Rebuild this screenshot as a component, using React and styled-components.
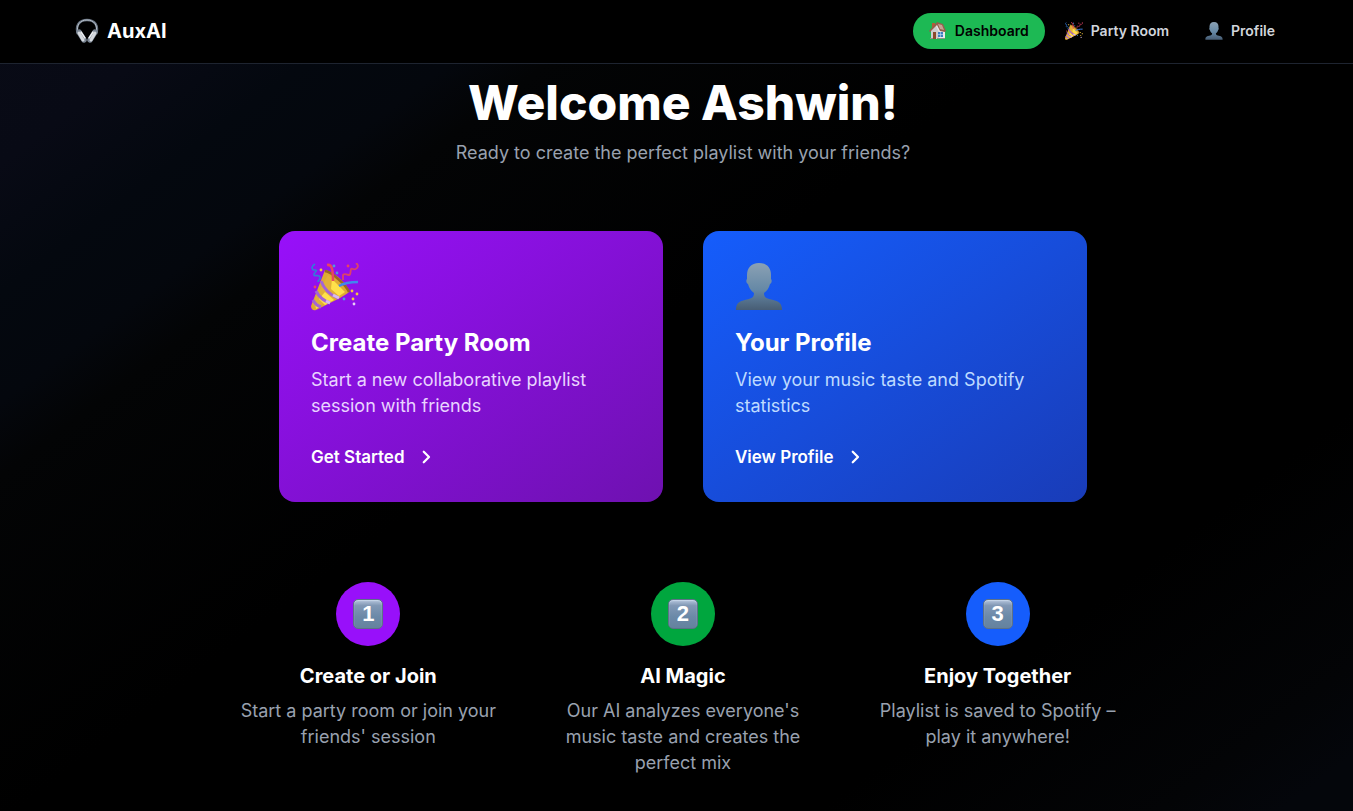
import React from "react";
import styled, { createGlobalStyle } from "styled-components";

const GlobalStyle = createGlobalStyle`
  *, *::before, *::after { box-sizing: border-box; }
  html { background: #000; }
  body {
    margin: 0;
    color: #fff;
    background: #000;
    font-family: Inter, "Liberation Sans", sans-serif;
    -webkit-font-smoothing: antialiased;
  }
  h1, h2, h3, p { margin: 0; }
  a { color: inherit; text-decoration: none; }
`;

const Page = styled.div`
  display: flex;
  flex-direction: column;
  min-height: 100vh;
  background: linear-gradient(143deg, #090b16 0%, #080a15 9%, #04080f 16%, #04070d 22%, #030405 26%, #000 45%, #000 78%, #030406 92%, #04060b 97%);
`;

const Header = styled.header`
  background: #000;
  border-bottom: 1px solid #1e2430;
  padding-left: 13px;
`;

const HeaderInner = styled.div`
  display: flex;
  align-items: center;
  justify-content: space-between;
  max-width: 1280px;
  height: 63px;
  margin: 0 auto;
  padding: 0 32px 2px;
`;

const Brand = styled.a`
  display: flex;
  align-items: center;
  gap: 8px;
  font-size: 20px;
  font-weight: 700;
  line-height: 28px;
`;

const Nav = styled.nav`
  display: flex;
  gap: 4px;
`;

const NavLink = styled.a`
  display: flex;
  align-items: center;
  gap: 8px;
  height: 36px;
  padding: 0 16px;
  border-radius: 18px;
  font-size: 14px;
  font-weight: 600;
  color: ${(p) => (p.$active ? "#000" : "#d1d5dc")};
  background: ${(p) => (p.$active ? "#1db954" : "transparent")};
`;

const Main = styled.main`
  display: flex;
  flex-direction: column;
  align-items: center;
  padding: 15px 0 32px 13px;
`;

const Title = styled.h1`
  font-size: 48px;
  font-weight: 800;
  line-height: 48px;
  text-align: center;
`;

const Subtitle = styled.p`
  margin-top: 12px;
  font-size: 18px;
  line-height: 28px;
  color: #99a1af;
`;

const Cards = styled.section`
  display: grid;
  grid-template-columns: 1fr 1fr;
  gap: 40px;
  width: 100%;
  max-width: 808px;
  margin-top: 64px;
`;

const Card = styled.article`
  display: flex;
  flex-direction: column;
  align-items: flex-start;
  padding: 32px;
  border-radius: 16px;
  background: linear-gradient(to bottom right, ${(p) => p.$from}, ${(p) => p.$to});
`;

const CardTitle = styled.h2`
  margin-top: 16px;
  font-size: 24px;
  font-weight: 700;
  line-height: 32px;
`;

const CardText = styled.p`
  margin-top: 8px;
  font-size: 18px;
  line-height: 26px;
  color: ${(p) => p.$color};
`;

const CardLink = styled.a`
  display: flex;
  align-items: center;
  gap: 12px;
  margin-top: 25px;
  font-size: 17px;
  font-weight: 600;
  line-height: 26px;
`;

const Steps = styled.section`
  display: grid;
  grid-template-columns: repeat(3, 1fr);
  gap: 48px;
  width: 100%;
  max-width: 896px;
  margin-top: 80px;
`;

const Step = styled.article`
  display: flex;
  flex-direction: column;
  align-items: center;
  text-align: center;
`;

const StepCircle = styled.div`
  display: flex;
  align-items: center;
  justify-content: center;
  width: 64px;
  height: 64px;
  border-radius: 50%;
  background: ${(p) => p.$color};
`;

const Keycap = styled.span`
  display: flex;
  align-items: center;
  justify-content: center;
  width: 30px;
  height: 30px;
  border: 1px solid #5d7188;
  border-radius: 5px;
  background: linear-gradient(#b5c5dc 0%, #8198b5 20%, #6b89a8 60%, #65829e 100%);
  box-shadow: inset 0 1px 1px #c6d5e8;
  font-family: "Liberation Sans", sans-serif;
  font-size: 22px;
  font-weight: 700;
  line-height: 28px;
`;

const StepTitle = styled.h3`
  margin-top: 16px;
  font-size: 20px;
  font-weight: 700;
  line-height: 28px;
`;

const StepText = styled.p`
  margin-top: 8px;
  font-size: 18px;
  line-height: 26px;
  color: #99a1af;
`;

function Headphones() {
  return (
    <svg width="24" height="26" viewBox="0 0 24 26" fill="none" aria-hidden="true">
      <path d="M3 16C0 8 4 2 12 2s12 6 9 14" stroke="#66717f" strokeWidth="2.4" />
      <path d="M3 14C1 7 5 2 12 2s11 5 9 12" stroke="#b5bec8" strokeWidth="1" />
      <path d="M4 14l5 8M20 14l-5 8" stroke="#788391" strokeWidth="5.4" strokeLinecap="round" />
      <path d="M4 15l4 7M20 15l-4 7" stroke="#d5d9de" strokeWidth="3" strokeLinecap="round" />
      <path d="M6 14l4 6M18 14l-4 6" stroke="#eef0f2" strokeWidth="1.4" strokeLinecap="round" />
    </svg>
  );
}

function House() {
  return (
    <svg width="18" height="18" viewBox="0 0 18 18" aria-hidden="true">
      <path d="M3 1h3v6H3z" fill="#b45a3a" />
      <path d="M2 8l6-6 6 2 2 5v8H2z" fill="#eceaea" />
      <path d="M2 9l5-5 3 6v7H2z" fill="#cfccce" />
      <path d="M0 9l8-9 6 2 3 7-1 1-5-1-3-6-7 7z" fill="#93604c" />
      <path d="M9 2l4 1 2 5-4-1z" fill="#c7a194" />
      <path d="M4 10h3v7H4z" fill="#8c4a2c" />
      <path d="M9 10h5v5H9z" fill="#3f7fc1" />
      <path d="M11.500 10v5M9 12.500h5" stroke="#c5ddf2" strokeWidth=".6" />
      <path d="M1 16h3v1H1zM8 16h8v1H8z" fill="#8c9286" />
    </svg>
  );
}

function Popper({ size }) {
  return (
    <svg width={size} height={size} viewBox="0 0 48 48" fill="none" aria-hidden="true">
      <path d="M14 7C22 8 38 22 38 29c-2 2-6 4-9 6L5 47c-3 1-5-1-5-4z" fill="#deaa32" />
      <path d="M17 12c6 6 13 12 17 18-3 2-6 4-9 5L5 44 1 41z" fill="#e2b038" />
      <path d="M21 16l13 13-6 4-8-7zM14 29l9 8-9 5-6-6zM4 39l6 4-5 3z" fill="#ffe04a" />
      <path d="M10 18c3 8 9 14 17 17M5 28c3 6 8 10 14 12M2 37c2 4 5 6 8 7" stroke="#a463d5" strokeWidth="3" />
      <path d="M22 32l6 3M15 38l4 2" stroke="#d9baf0" strokeWidth="3" />
      <path d="M14 8c7 1 21 14 24 21" stroke="#9b681e" strokeWidth="2.4" />
      <path d="M16 2c5-1 6 4 6 16" stroke="#e94362" strokeWidth="2.5" />
      <path d="M28 23c5-3 10-4 19-4" stroke="#4186ee" strokeWidth="2.5" />
      <path d="M4 1c-5 3-3 6 0 6 4 0-2 3-1 5s5-1 6 2-2 2-2 5" stroke="#347bd8" strokeWidth="1.7" />
      <path d="M45 0c5 4-1 7-3 6-4-2-1 6-4 6s-4-2-6 0v5" stroke="#dc4368" strokeWidth="1.8" />
      <g fill="#f5c73d"><circle cx="10" cy="7" r="1.4" /><circle cx="41" cy="28" r="1.4" /><circle cx="46" cy="31" r="1.4" /><circle cx="42" cy="36" r="1.4" /></g>
      <g fill="#5098dc"><circle cx="23" cy="3" r="1.4" /><circle cx="26" cy="10" r="1.4" /><circle cx="33" cy="36" r="1.4" /></g>
      <g fill="#e94362"><circle cx="4" cy="24" r="1.4" /><circle cx="37" cy="3" r="1.4" /></g>
      <circle cx="43" cy="41" r="1.4" fill="#e8cdf7" />
    </svg>
  );
}

function Person({ size }) {
  const id = `person-${size}`;
  return (
    <svg width={size} height={size} viewBox="0 0 48 48" aria-hidden="true">
      <defs>
        <linearGradient id={id} x1="0" y1="0" x2="0" y2="48" gradientUnits="userSpaceOnUse">
          <stop offset="0" stopColor="#8ba1b4" />
          <stop offset=".55" stopColor="#6689a6" />
          <stop offset="1" stopColor="#465b72" />
        </linearGradient>
      </defs>
      <path d="M24 0c8 0 12 5 12 12v4c1 1 1 4-1 5-1 4-3 7-6 9 0 4 2 5 5 6 9 2 13 3 13 11H1c0-8 4-9 13-11 3-1 5-2 5-6-3-2-5-5-6-9-2-1-2-4-1-5v-4C12 5 16 0 24 0z" fill={`url(#${id})`} />
    </svg>
  );
}

function Chevron() {
  return (
    <svg width="18" height="18" viewBox="0 0 24 24" fill="none" stroke="currentColor" strokeWidth="3" strokeLinecap="round" strokeLinejoin="round" aria-hidden="true">
      <path d="M9 5l7 7-7 7" />
    </svg>
  );
}

const steps = [
  { n: 1, color: "#9810fa", title: "Create or Join", text: "Start a party room or join your friends' session" },
  { n: 2, color: "#00a63e", title: "AI Magic", text: "Our AI analyzes everyone's music taste and creates the perfect mix" },
  { n: 3, color: "#155dfc", title: "Enjoy Together", text: "Playlist is saved to Spotify – play it anywhere!" },
];

export default function App() {
  return (
    <Page>
      <GlobalStyle />
      <Header>
        <HeaderInner>
          <Brand href="#"><Headphones />AuxAI</Brand>
          <Nav>
            <NavLink href="#dashboard" $active><House />Dashboard</NavLink>
            <NavLink href="#party"><Popper size={18} />Party Room</NavLink>
            <NavLink href="#profile"><Person size={18} />Profile</NavLink>
          </Nav>
        </HeaderInner>
      </Header>
      <Main>
        <Title>Welcome Ashwin!</Title>
        <Subtitle>Ready to create the perfect playlist with your friends?</Subtitle>
        <Cards>
          <Card $from="#9810fa" $to="#6e11b0">
            <Popper size={48} />
            <CardTitle>Create Party Room</CardTitle>
            <CardText $color="#e9d4ff">Start a new collaborative playlist session with friends</CardText>
            <CardLink href="#party">Get Started<Chevron /></CardLink>
          </Card>
          <Card $from="#155dfc" $to="#193cb8">
            <Person size={48} />
            <CardTitle>Your Profile</CardTitle>
            <CardText $color="#bedbff">View your music taste and Spotify statistics</CardText>
            <CardLink href="#profile">View Profile<Chevron /></CardLink>
          </Card>
        </Cards>
        <Steps>
          {steps.map((s) => (
            <Step key={s.n}>
              <StepCircle $color={s.color}><Keycap>{s.n}</Keycap></StepCircle>
              <StepTitle>{s.title}</StepTitle>
              <StepText>{s.text}</StepText>
            </Step>
          ))}
        </Steps>
      </Main>
    </Page>
  );
}
